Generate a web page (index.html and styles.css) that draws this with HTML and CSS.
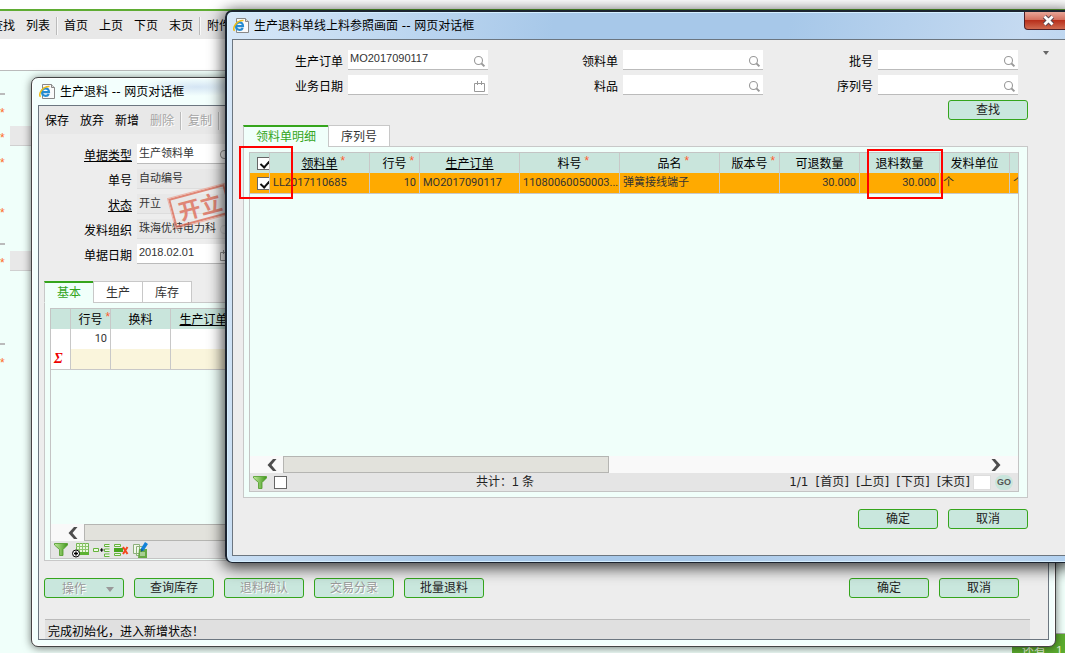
FILE: index.html
```html
<!DOCTYPE html>
<html lang="zh-CN">
<head>
<meta charset="utf-8">
<title>生产退料</title>
<link rel="stylesheet" href="styles.css">
</head>
<body>
<svg class="defs" aria-hidden="true">
  <defs>
    <linearGradient id="gf" x1="0" x2="1"><stop offset="0" stop-color="#c2ea9c"/><stop offset="1" stop-color="#3f961b"/></linearGradient>
    <symbol id="i-search" viewBox="0 0 13 13"><circle cx="5.5" cy="5.5" r="4" fill="none" stroke="#999" stroke-width="1.1"/><path d="M8.400 8.400l3 3" stroke="#999" stroke-width="2"/></symbol>
    <symbol id="i-cal" viewBox="0 0 13 13"><path d="M1.5 3.5h10v8h-10zM4.5 1v4M8.5 1v4" fill="none" stroke="#999"/></symbol>
    <symbol id="i-ie" viewBox="0 0 17 17"><path d="M3.5 1.5h9l3 3v11h-12z" fill="#fafafa" stroke="#888"/><path d="M12.500 1.500v3h3" fill="#ddd" stroke="#888"/><path d="M3.200 9.200h6.800c.2-5.200-7.200-5.200-7 0 .1 4.300 5.200 4.700 6.800 1.700" fill="none" stroke="#258bd2" stroke-width="2.200"/><path d="M1.700 13.700C-1.500 12 3.500 3 10.500 3.600" fill="none" stroke="#f0bd18" stroke-width="1.500"/></symbol>
    <symbol id="i-filter" viewBox="0 0 14 13"><path d="M.5.5h13v1.500L9 6.500v6H5.500v-6L.5 2z" fill="url(#gf)" stroke="#4c9b27" stroke-width=".8"/></symbol>
    <symbol id="i-left" viewBox="0 0 10 12"><path d="M6 0h3.500L4.500 6l5 6H6L.5 6z" fill="#4d4d4d"/></symbol>
  </defs>
</svg>

<div class="page">
  <nav class="toolbar page-bar">
    <button>查找</button><button>列表</button><i class="sep"></i>
    <button>首页</button><button>上页</button><button>下页</button><button>末页</button><i class="sep"></i>
    <button>附件</button>
  </nav>
  <div class="page-gap"></div>
  <div class="page-form">
    <div class="line"></div><div>*</div><div>*<span></span></div><div>*</div><div></div><div>*</div>
    <div class="line"></div><div>*<span></span></div><div></div><div></div><div class="line"></div><div>*</div>
  </div>
  <footer class="page-notice">还有&nbsp;&nbsp; 1</footer>
</div>

<section class="window win-return">
  <header class="title"><svg width="17" height="17"><use href="#i-ie"/></svg><h1>生产退料 -- 网页对话框</h1></header>
  <div class="client">
    <nav class="toolbar">
      <button>保存</button><button>放弃</button><button>新增</button><button disabled>删除</button><i class="sep"></i>
      <button disabled>复制</button><i class="sep"></i><button>提交</button>
    </nav>
    <div class="doc-form">
      <label for="d1"><a href="#type">单据类型</a></label><span class="field"><input id="d1" value="生产领料单"><svg><use href="#i-search"/></svg></span>
      <label for="d2">单号</label><span class="field locked"><input id="d2" value="自动编号" readonly></span>
      <label for="d3"><a href="#state">状态</a></label><span class="field locked"><input id="d3" value="开立" readonly></span>
      <label for="d4">发料组织</label><span class="field locked"><input id="d4" value="珠海优特电力科" readonly><svg class="faint"><use href="#i-search"/></svg></span>
      <label for="d5">单据日期</label><span class="field"><input id="d5" value="2018.02.01"><svg><use href="#i-cal"/></svg></span>
      <div class="stamp">开立</div>
    </div>
    <div class="tabs"><button class="active">基本</button><button>生产</button><button>库存</button></div>
    <div class="panel">
      <div class="grid">
        <table>
          <colgroup><col class="w20"><col class="w40"><col class="w60"><col class="w66"><col></colgroup>
          <thead><tr><th></th><th><span>行号<sup>*</sup></span></th><th>换料</th><th><a href="#mo">生产订单</a></th><th></th></tr></thead>
          <tbody>
            <tr class="plain"><td></td><td class="num">10</td><td></td><td></td><td></td></tr>
            <tr class="sum"><td class="sigma">Σ</td><td></td><td></td><td></td><td></td></tr>
          </tbody>
        </table>
        <div class="scroll"><svg class="arrow" viewBox="0 0 10 12"><use href="#i-left"/></svg><div class="thumb long"></div></div>
        <div class="gridbar">
          <button aria-label="筛选"><svg width="14" height="13"><use href="#i-filter"/></svg></button>
          <button aria-label="新增行"><svg width="17" height="16" viewBox="0 0 17 16"><path d="M4.500 1.500h12v11h-12z" fill="#e9f7dd" stroke="#73b552"/><path d="M4 4.500h12M4 7.500h12M7.500 1v9M10.500 1v9M13.500 1v9" stroke="#8cc66c"/><path d="M6 10h11v3H6z" fill="#5db233"/><circle cx="4" cy="11.500" r="3.500" fill="#fff" stroke="#000"/><path d="M2 11.500h4M4 9.500v4" stroke="#000" stroke-width="1.400"/></svg></button>
          <button aria-label="插入行"><svg width="17" height="14" viewBox="0 0 17 14"><path d="M.5 5.500h5v3h-5zM16.500 1.500h-5v2h5M16.500 6h-5v2.500h5M16.500 11h-5v2.500h5" fill="#eefae6" stroke="#65b43c"/><path d="M7 7h3.500M8.700 5.300v3.500" stroke="#000" stroke-width="1.200"/></svg></button>
          <button aria-label="删除行"><svg width="15" height="14" viewBox="0 0 15 14"><path d="M.5 1.500h6v2h-6zM.5 10.500h6v2h-6z" fill="#eefae6" stroke="#65b43c"/><path d="M0 5h9v4H0z" fill="#48a51e"/><path d="M9 4l4.500 7M13.500 4L9 11" stroke="#f4471d" stroke-width="2"/></svg></button>
          <button aria-label="复制行"><svg width="15" height="16" viewBox="0 0 15 16"><path d="M.5 2.500h6v9h-6zM3.500 4.500h6v9h-6z" fill="#f1f8ea" stroke="#8caf7a"/><path d="M6 7h8v9H5z" fill="#66a944"/><path d="M7 11h5M7 13h5" stroke="#e9f5df"/><path d="M13.500 1L9 8" stroke="#1382d8" stroke-width="3.500"/><path d="M8 10l.3-3 2 1z" fill="#075096"/></svg></button>
        </div>
      </div>
    </div>
    <div class="actions">
      <button class="btn drop" disabled>操作<i></i></button><button class="btn">查询库存</button><button class="btn" disabled>退料确认</button><button class="btn" disabled>交易分录</button><button class="btn">批量退料</button>
      <button class="btn push">确定</button><button class="btn">取消</button>
    </div>
    <div class="status">完成初始化，进入新增状态！</div>
  </div>
</section>

<section class="window win-pick">
  <header class="title"><svg width="17" height="17"><use href="#i-ie"/></svg><h1>生产退料单线上料参照画面 -- 网页对话框</h1></header>
  <button class="close" aria-label="关闭"><svg width="13" height="11" viewBox="0 0 13 11"><path d="M2.500 1.500l8 8M10.500 1.500l-8 8" stroke="#56424c" stroke-width="4.600"/><path d="M2.500 1.500l8 8M10.500 1.500l-8 8" stroke="#fff" stroke-width="2.800"/></svg></button>
  <div class="client">
    <i class="more"></i>
    <div class="query">
      <label for="q1">生产订单</label><span class="field"><input id="q1" value="MO2017090117"><svg><use href="#i-search"/></svg></span>
      <label for="q2">领料单</label><span class="field"><input id="q2"><svg><use href="#i-search"/></svg></span>
      <label for="q3">批号</label><span class="field"><input id="q3"><svg><use href="#i-search"/></svg></span>
      <label for="q4">业务日期</label><span class="field"><input id="q4"><svg><use href="#i-cal"/></svg></span>
      <label for="q5">料品</label><span class="field"><input id="q5"><svg><use href="#i-search"/></svg></span>
      <label for="q6">序列号</label><span class="field"><input id="q6"><svg><use href="#i-search"/></svg></span>
    </div>
    <div class="find"><button class="btn push">查找</button></div>
    <div class="tabs"><button class="active">领料单明细</button><button>序列号</button></div>
    <div class="panel">
      <div class="grid">
        <table>
          <colgroup><col class="w20"><col class="w100"><col class="w50"><col class="w100"><col class="w100"><col class="w100"><col class="w60"><col class="w80"><col class="w80"><col class="w70"><col></colgroup>
          <thead><tr><th class="tick"><input type="checkbox" checked aria-label="全选"></th><th><span><a href="#pick">领料单</a><sup>*</sup></span></th><th><span>行号<sup>*</sup></span></th><th><a href="#mo2">生产订单</a></th><th><span>料号<sup>*</sup></span></th><th><span>品名<sup>*</sup></span></th><th><span>版本号<sup>*</sup></span></th><th>可退数量</th><th>退料数量</th><th>发料单位</th><th></th></tr></thead>
          <tbody><tr class="picked"><td class="tick"><input type="checkbox" checked aria-label="选择"></td><td>LL2017110685</td><td class="num">10</td><td>MO2017090117</td><td>11080060050003...</td><td>弹簧接线端子</td><td></td><td class="num">30.000</td><td class="num">30.000</td><td>个</td><td>个</td></tr></tbody>
        </table>
        <div class="scroll"><svg class="arrow" viewBox="0 0 10 12"><use href="#i-left"/></svg><div class="thumb"></div><svg class="arrow next" viewBox="0 0 10 12"><use href="#i-left"/></svg></div>
        <div class="gridbar pager">
          <button aria-label="筛选"><svg width="14" height="13"><use href="#i-filter"/></svg></button>
          <input type="checkbox" aria-label="全部">
          <span class="total">共计：1 条</span>
          <span>1/1</span>
          <a href="#first">[首页]</a><a href="#prev">[上页]</a><a href="#next">[下页]</a><a href="#last">[末页]</a>
          <input class="goto" aria-label="页码"><button class="go">GO</button>
        </div>
      </div>
    </div>
    <div class="actions"><button class="btn push">确定</button><button class="btn">取消</button></div>
  </div>
  <div class="mark mark-tick"></div>
  <div class="mark mark-qty"></div>
</section>
</body>
</html>
```
FILE: styles.css
```css
* { box-sizing: border-box; }
body {
  margin: 0;
  height: 100vh;
  overflow: hidden;
  position: relative;
  background: #f0fffa;
  color: #000;
  font: 12px/18px "Liberation Sans", "Noto Sans CJK SC", sans-serif;
}
button, input { font: inherit; color: inherit; margin: 0; padding: 0; border: 0; background: none; }
svg { display: block; flex: none; }
a { color: inherit; }
.defs { position: absolute; width: 0; height: 0; }

/* Page behind the dialogs */
.page { height: 100%; display: flex; flex-direction: column; border-top: 9px solid #fff; overflow: hidden; }
.page-gap { flex: none; height: 32px; background: #fff; border-bottom: 1px solid #bbb; }
.page-form { padding-top: 5px; flex: 1; min-height: 0; color: #ff6a26; }
.page-form div { height: 25px; display: flex; line-height: 24px; }
.page-form .line { height: 19px; margin-bottom: 6px; width: 5px; border-bottom: 2px solid #bbb; }
.page-form span { width: 24px; height: 20px; margin-left: 5px; background: #e8e8e8; border-bottom: 1px solid #d0d0d0; }
.page-notice { flex: none; align-self: flex-end; width: 53px; height: 20px; padding: 8px 0 0 10px; overflow: hidden; white-space: nowrap; background: #5bac2e; border-top: 1px solid #aaa; color: #e6f5dc; }
.toolbar { display: flex; flex: none; align-items: center; gap: 11px; height: 28px; padding: 2px 0 0 6px; background: #e8e8e8; white-space: nowrap; }
.page-bar { height: 30px; margin-left: -9px; padding-left: 0; border-top: 2px solid #5fac33; }
.toolbar button { flex: none; }
.toolbar button:disabled { color: #a5a5a5; text-shadow: 1px 1px #fff; }
.sep { flex: none; width: 2px; height: 18px; margin: 0 -5px; background: #bbb; border-right: 1px solid #f8f8f8; }

/* Dialog frames */
.window { position: absolute; display: flex; flex-direction: column; padding: 0 6px 6px; border: 1px solid #444; border-radius: 7px; }
.win-return {
  inset: 77px 9px 6px 31px;
  background: radial-gradient(ellipse 60px 9px at 165px 9px, #d5e5f4, transparent), #f3fffd;
  box-shadow: inset 0 0 0 1px #fff, 0 1px 9px rgba(0,0,0,.55);
}
.win-pick {
  inset: 10px -8px 90px 225px;
  background: linear-gradient(100deg, #d8e8f8, #a7c8e9 35%, #a7c8e9 60%, #c5daf1 85%, #b1d0ef);
  border: 2px solid #1c2430;
  border-bottom-width: 1px;
  padding: 0 5px 6px;
  box-shadow: inset 0 0 0 1px #d5efff, 0 3px 15px 2px rgba(0,0,0,.75);
}
.title { display: flex; flex: none; align-items: center; gap: 4px; height: 27px; padding-left: 1px; }
.title h1 { margin: 0; font: 12px/18px "DejaVu Sans", "Noto Sans CJK SC", sans-serif; white-space: pre; }
.client { flex: 1; min-height: 0; display: flex; flex-direction: column; border: 1px solid #6c7680; background: #ededed; }
.win-pick .client { position: relative; padding: 10px 37px 26px 10px; }
.close {
  position: absolute; top: 0; right: 0; width: 47px; height: 18px; padding-left: 17px;
  border: 1px solid #4e2028; border-top: 0; border-radius: 0 0 4px 4px;
  background: linear-gradient(#e8a698, #d4715f 45%, #b8301c 50%, #d06a50);
}
.more { position: absolute; top: 11px; right: 16px; border: 4px solid transparent; border-top-color: #666; border-width: 4px 3px 0; }

/* Fields */
label { text-align: right; padding-top: 3px; white-space: nowrap; }
.field { display: flex; align-items: center; height: 20px; background: #fff; border-bottom: 1px solid #bbb; }
.field input { flex: 1; min-width: 0; width: 0; height: 19px; padding: 0 0 3px 2px; font-size: 11px; color: #333; outline: 0; }
.field svg { width: 13px; height: 13px; margin: 3px 2px 0 0; }
.field .faint { opacity: .25; }
.locked { background: #e8e8e8; border-color: #ddd; }
.doc-form { position: relative; display: grid; grid-template-columns: 88px 97px; grid-auto-rows: 20px; gap: 5px; padding: 10px 0 0 5px; }
.stamp {
  position: absolute; left: 132px; top: 57px; width: 58px; height: 30px;
  border: 2px solid #dd6650; outline: 1px solid #eda393; color: #dd6650; opacity: .75;
  font: bold 22px/24px "Noto Sans CJK SC", sans-serif; text-align: center; transform: rotate(-15deg);
}
.query { display: grid; grid-template-columns: 100px 140px 125px 140px 105px 140px; grid-auto-rows: 20px; gap: 5px; justify-content: start; }
.win-pick .find { display: flex; padding-top: 5px; }

/* Tabs and tables */
.tabs { display: flex; flex: none; height: 22px; margin-bottom: -1px; position: relative; }
.tabs button { padding: 1px 12px 0; margin-left: -1px; background: #fff; border: 1px solid #c8c8c8; color: #333; }
.tabs .active { margin-left: 0; background: #f0fffa; border-top: 2px solid #35a51c; border-bottom-color: #f0fffa; color: #35a51c; }
.win-return .tabs { margin: 17px 0 -1px 5px; }
.win-pick .tabs { margin-top: 5px; }
.panel { flex: 1; min-height: 0; display: flex; padding: 5px; border: 1px solid #c8c8c8; background: #f0fffa; }
.win-pick .panel { padding-right: 8px; }
.win-return .panel { margin: 0 29px 0 5px; padding-bottom: 1px; }
.grid { flex: 1; min-width: 0; display: flex; flex-direction: column; border: 1px solid #c4c4c4; overflow: hidden; }
table { width: 100%; table-layout: fixed; border-spacing: 0; }
th, td { height: 20px; padding: 0; border-right: 1px solid #c8c8c8; white-space: nowrap; overflow: hidden; }
th { background: #c9e5dc; padding-top: 1px; font-weight: 400; text-align: center; }
th:last-child, td:last-child { border-right: 0; }
th span { position: relative; }
sup { position: absolute; left: 100%; top: -5px; padding-left: 3px; color: #ff5d2e; font-size: 12px; line-height: 18px; }
td { height: 21px; padding: 0 3px; border-bottom: 1px solid #c8c8c8; color: #333; font: 11px/18px Roboto, "Noto Sans CJK SC", sans-serif; }
.num { text-align: right; }
.plain td { height: 20px; background: #fff; border-bottom: 0; }
.sum td { background: #faf5dc; }
.sum .sigma { background: #fff; color: #e00; font: italic bold 14px/18px "Liberation Serif", serif; }
.picked td { background: #ffaa00; }
th.tick, td.tick { padding: 0 0 0 7px; text-align: left; }
input[type=checkbox] { appearance: none; display: block; flex: none; width: 13px; height: 13px; border: 1px solid #666; background: #fff; }
input[type=checkbox]:checked::before { content: ""; display: block; width: 4px; height: 7px; margin: 1px 0 0 4px; border: solid #111; border-width: 0 2px 2px 0; transform: rotate(42deg); }
.w20 { width: 20px; } .w40 { width: 40px; } .w50 { width: 50px; } .w60 { width: 60px; } .w66 { width: 66px; }
.w70 { width: 70px; } .w80 { width: 80px; } .w100 { width: 100px; }
.scroll { flex: none; margin-top: auto; display: flex; align-items: center; height: 17px; background: #f9f9f9; }
.arrow { width: 10px; height: 12px; margin: 0 6px 0 17px; }
.next { margin: 0 17px 0 auto; transform: scaleX(-1); }
.thumb { width: 42.5%; height: 17px; background: #e2e2dc; border: 1px solid #b5b5b2; }
.thumb.long { width: 70%; }
.gridbar { flex: none; display: flex; align-items: center; gap: 4px; height: 17px; padding-left: 3px; background: #e5e5e5; white-space: nowrap; }
.pager { height: 18px; padding-right: 5px; gap: 7px; color: #222; font-family: "DejaVu Sans", "Noto Sans CJK SC", sans-serif; }
.pager a { text-decoration: none; }
.pager .total { margin: 0 auto 0 182px; font-family: "Liberation Sans", "Noto Sans CJK TC", sans-serif; }
.goto { width: 18px; height: 15px; background: #fff; border: 1px solid #ddd; margin: 0 -3px 0 -4px; }
.go { width: 18px; height: 15px; border-radius: 8px; background: #c9e5dc; color: #555; font: bold 9px/15px "Liberation Sans", sans-serif; }

/* Buttons */
.btn { flex: none; width: 80px; height: 20px; padding-top: 1px; border: 1px solid #35a51c; border-radius: 3px; background: #c9e7dd; color: #222; line-height: 17px; }
.btn:disabled { color: #999; text-shadow: 1px 1px #fff; }
.push { margin-left: auto; }
.drop { padding: 3px 0 0 8px; line-height: 15px; }
.drop i { display: inline-block; margin: 0 0 1px 20px; border: 4px solid transparent; border-top: 5px solid #999; border-bottom: 0; }
.actions { flex: none; display: flex; gap: 10px; }
.win-return .actions { padding: 17px 29px 0 5px; }
.win-pick .actions { padding-top: 11px; }
.status { flex: none; height: 20px; margin: 21px 18px 0 6px; padding: 3px 0 0 3px; background: #e0e0e0; border-top: 1px solid #bbb; line-height: 18px; overflow: hidden; }

/* Highlight boxes over the table */
.mark { position: absolute; border: 2px solid #f00; pointer-events: none; }
.mark-tick { left: 12px; top: 134px; width: 54px; height: 53px; }
.mark-qty { left: 640px; top: 137px; width: 76px; height: 50px; }
```
